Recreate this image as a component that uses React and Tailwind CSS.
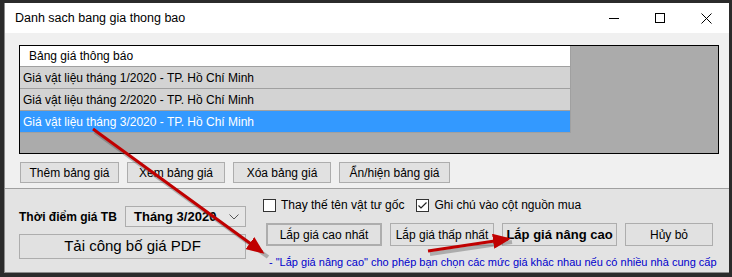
import { useState } from "react";

const rows = [
  "Giá vật liệu tháng 1/2020 - TP. Hồ Chí Minh",
  "Giá vật liệu tháng 2/2020 - TP. Hồ Chí Minh",
  "Giá vật liệu tháng 3/2020 - TP. Hồ Chí Minh",
];

function WinButton({ children, className = "" }) {
  return (
    <button
      className={
        "flex items-center justify-center border border-[#adadad] bg-[#e1e1e1] text-black " +
        className
      }
    >
      {children}
    </button>
  );
}

function Check({ checked, label }) {
  return (
    <label className="flex items-center gap-[5px]">
      <span className="flex h-[13px] w-[13px] items-center justify-center border border-[#333] bg-white">
        {checked ? (
          <svg width="11" height="11" viewBox="0 0 11 11">
            <path d="M1.5 5.5 L4 8 L9.5 2.5" fill="none" stroke="#222" strokeWidth="1.2" />
          </svg>
        ) : null}
      </span>
      <span>{label}</span>
    </label>
  );
}

export default function App() {
  const [selected] = useState(2);

  return (
    <div
      className="relative h-[277px] w-[732px] overflow-hidden bg-[#2b2b2b] pl-[4px] pt-[3px] text-[12px] text-black"
      style={{ fontFamily: '"Liberation Sans", Arial, sans-serif' }}
    >
      <div className="flex h-[270px] w-[725px] flex-col border-b border-l border-[#8c8c8c] bg-[#f0f0f0]">
        {/* title bar */}
        <div className="flex h-[30px] items-center bg-white pl-[10px]">
          <span className="flex-1 text-[12.5px]">Danh sach bang gia thong bao</span>
          <div className="flex items-center">
            <div className="flex h-[30px] w-[46px] items-center justify-center">
              <div className="h-px w-[10px] bg-black" />
            </div>
            <div className="flex h-[30px] w-[46px] items-center justify-center">
              <div className="h-[10px] w-[10px] border border-black" />
            </div>
            <div className="flex h-[30px] w-[46px] items-center justify-center">
              <svg width="11" height="11" viewBox="0 0 11 11">
                <path d="M0.5 0.5 L10.5 10.5 M10.5 0.5 L0.5 10.5" stroke="#000" strokeWidth="1" />
              </svg>
            </div>
          </div>
        </div>

        {/* top panel */}
        <div className="flex h-[155px] flex-col pl-[14px] pt-[12px]">
          <div className="flex h-[109px] w-[700px] flex-col border border-black bg-[#ababab]">
            <div className="flex h-[21px] w-[551px] items-center border-b border-r border-[#a0a0a0] bg-white pl-[9px]">
              Bảng giá thông báo
            </div>
            {rows.map((r, i) => (
              <div
                key={r}
                className={
                  "flex h-[22px] w-[551px] items-center border-b border-r border-[#a0a0a0] pl-[3px] " +
                  (i === selected ? "bg-[#3399ff] text-white" : "bg-[#d3d3d3]")
                }
              >
                {r}
              </div>
            ))}
          </div>
          <div className="mt-[8px] flex gap-[8px] pl-[1px]">
            <WinButton className="h-[21px] w-[99px]">Thêm bảng giá</WinButton>
            <WinButton className="h-[21px] w-[98px]">Xem bảng giá</WinButton>
            <WinButton className="h-[21px] w-[98px]">Xóa bảng giá</WinButton>
            <WinButton className="h-[21px] w-[111px]">Ẩn/hiện bảng giá</WinButton>
          </div>
        </div>

        {/* bottom panel */}
        <div className="flex flex-1 border-t border-[#a0a0a0] bg-[#e3e3e3]">
          <div className="flex w-[250px] flex-col pl-[14px] pt-[17px]">
            <div className="flex items-center">
              <span className="w-[106px] text-[12px] font-bold">Thời điểm giá TB</span>
              <div className="flex h-[21px] w-[121px] items-center border border-[#adadad] bg-[#e6e6e6] pl-[8px] font-bold">
                <span className="flex-1 text-[13px]">Tháng 3/2020</span>
                <svg width="10" height="6" viewBox="0 0 10 6" className="mr-[6px]">
                  <path d="M0.5 0.5 L5 5 L9.5 0.5" fill="none" stroke="#555" strokeWidth="1" />
                </svg>
              </div>
            </div>
            <WinButton className="mt-[7px] h-[25px] w-[227px] text-[15px]">Tải công bố giá PDF</WinButton>
          </div>
          <div className="flex flex-col pl-[8px] pt-[7px]">
            <div className="flex items-center gap-[12px]">
              <Check label="Thay thế tên vật tư gốc" />
              <Check checked label="Ghi chú vào cột nguồn mua" />
            </div>
            <div className="mt-[9px] flex gap-[8px] pl-[3px]">
              <WinButton className="h-[23px] w-[116px] border-2 border-[#0078d7]">Lắp giá cao nhất</WinButton>
              <WinButton className="h-[23px] w-[104px]">Lắp giá thấp nhất</WinButton>
              <WinButton className="h-[23px] w-[115px] text-[13px] font-bold">Lắp giá nâng cao</WinButton>
              <WinButton className="h-[23px] w-[88px]">Hủy bỏ</WinButton>
            </div>
            <div className="mt-[8px] whitespace-nowrap pl-[6px] text-[11px] text-[#0000cc]">
              - "Lắp giá nâng cao" cho phép bạn chọn các mức giá khác nhau nếu có nhiều nhà cung cấp
            </div>
          </div>
        </div>
      </div>

      {/* annotation arrows */}
      <svg className="pointer-events-none absolute left-0 top-0" width="732" height="277">
        <defs>
          <marker id="ah" markerWidth="6" markerHeight="5" refX="5" refY="2.5" orient="auto">
            <path d="M0 0 L6 2.5 L0 5 Z" fill="#c00000" />
          </marker>
        </defs>
        <line x1="93" y1="130" x2="266" y2="255" stroke="#5a5a5a" strokeOpacity="0.4" strokeWidth="4" transform="translate(2,2)" />
        <line x1="93" y1="129" x2="262" y2="252" stroke="#c00000" strokeWidth="3" markerEnd="url(#ah)" />
        <line x1="428" y1="252" x2="510" y2="240" stroke="#5a5a5a" strokeOpacity="0.4" strokeWidth="4" transform="translate(2,2)" />
        <line x1="428" y1="251" x2="508" y2="239" stroke="#c00000" strokeWidth="3" markerEnd="url(#ah)" />
      </svg>
    </div>
  );
}
